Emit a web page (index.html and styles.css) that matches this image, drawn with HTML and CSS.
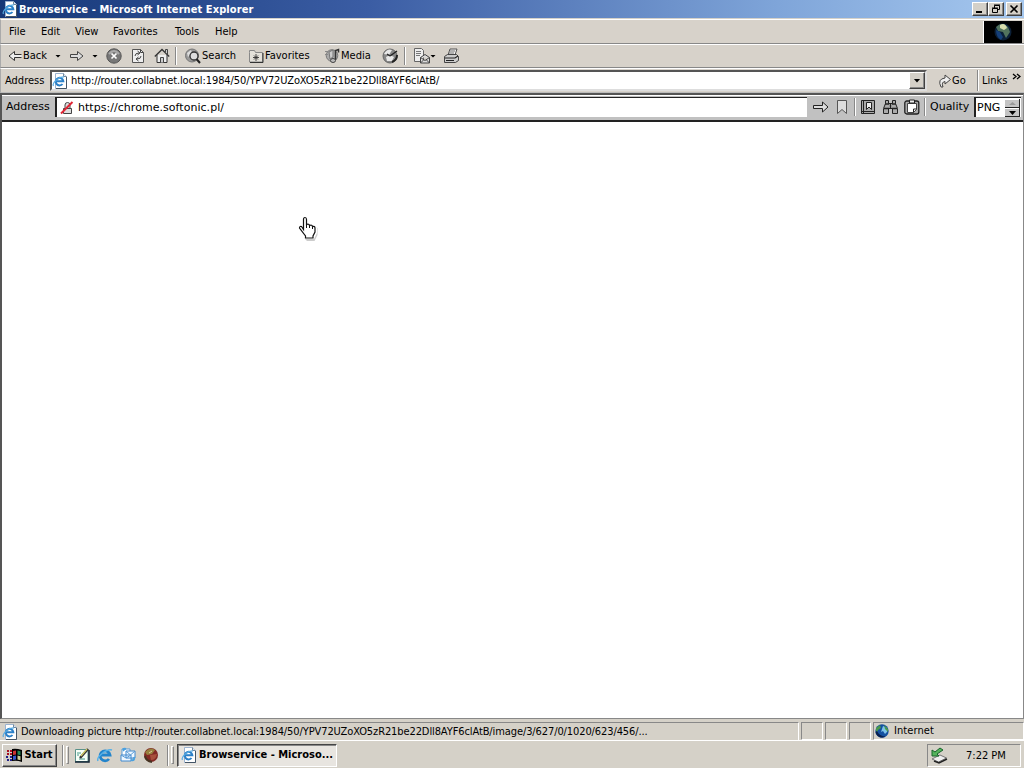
FILE: index.html
```html
<!DOCTYPE html>
<html lang="en">
<head>
<meta charset="utf-8">
<title>Browservice - Microsoft Internet Explorer</title>
<link rel="stylesheet" href="styles.css">
</head>
<body>
<svg class="defs" width="0" height="0">
  <defs>
    <symbol id="ie" viewBox="0 0 16 16">
      <path d="M3.500.5h8l3 3v12h-11z" fill="#fff" stroke="#9bb3d0"/>
      <path d="M11.500.5v3h3" fill="#dce8f4" stroke="#789"/>
      <path d="M14.500 4v11.500H4" fill="none" stroke="#456" />
      <path d="M10.500 11a3.800 3.800 0 1 1 .8-2.800H4.500" fill="none" stroke="#2b80c8" stroke-width="2"/>
      <path d="M1.500 13C-.5 10 7 3.500 12 4" fill="none" stroke="#56aae2" stroke-width="1.200"/>
    </symbol>
    <symbol id="arrow" viewBox="0 0 14 12">
      <path d="M.5 4.500h7v-3l5.500 4.500-5.500 4.500v-3h-7z" fill="#ddd" stroke="#444"/>
    </symbol>
    <symbol id="globe" viewBox="0 0 16 16">
      <circle cx="8" cy="8" r="6.700" fill="#1451a0"/>
      <path d="M2 5l4-3 1 3-3 2-1 2-1-1z" fill="#4a9a4b"/>
      <path d="M9 3l4 2v4l-2 2-2-3-2 1z" fill="#7fc4ea"/>
      <path d="M10 2l4 4v3l-3-3z" fill="#4a9a4b"/>
      <path d="M1.500 9a6.600 6.600 0 0 0 10 4.500C7 13 5 12 3 8z" fill="#0a204e"/>
    </symbol>
  </defs>
</svg>
<div class="screen">
  <header class="title">
    <svg class="ic16"><use href="#ie"/></svg>
    <h1>Browservice - Microsoft Internet Explorer</h1>
    <div class="winbtns">
      <button><svg width="14" height="12"><path d="M3 9h6" stroke="#000" stroke-width="2"/></svg></button>
      <button><svg width="14" height="12"><path d="M5.500 5V2.500h5v4H9M5 2h6M3.500 5.500h5v4h-5zM3 5h6" fill="none" stroke="#000"/></svg></button>
      <button class="close"><svg width="14" height="12"><path d="M3.500 2.500l7 7m0-7l-7 7" stroke="#000" stroke-width="1.600"/></svg></button>
    </div>
  </header>
  <nav class="menu">
    <span class="m-file">File</span><span class="m-edit">Edit</span><span class="m-view">View</span><span class="m-fav">Favorites</span><span class="m-tools">Tools</span><span class="m-help">Help</span>
    <div class="throbber"><svg width="38" height="22">
      <circle cx="19" cy="11" r="8.500" fill="#0c2038"/>
      <path d="M12 6q6-6 12 0l2 5-4 6-3-6-5-1z" fill="#52735d"/>
      <path d="M16 4q5-3 7 3l-3 2-4-2z" fill="#d8ddac"/>
      <path d="M12 9l4 2 3 5-2 3q-5-3-5-10z" fill="#153f7a"/>
    </svg></div>
  </nav>
  <div class="tools">
    <svg class="back" width="14" height="12"><path d="M13.500 4.500h-7v-3L1 6l5.500 4.500v-3h7" fill="#eee" stroke="#333"/></svg>
    <span class="t-back">Back</span><i class="dd dd1"></i>
    <svg class="fwd" width="14" height="12"><use href="#arrow"/></svg><i class="dd dd2"></i>
    <svg class="stop" width="16" height="16"><circle cx="8" cy="8" r="7.200" fill="#777" stroke="#555"/><path d="M3 6q5-6 10 0" fill="none" stroke="#aaa" stroke-width="2"/><path d="M5.500 5.500l5 5m0-5l-5 5" stroke="#fff" stroke-width="1.700"/></svg>
    <svg class="refresh" width="14" height="16"><path d="M1.500 1.500h8l3 3v10h-11z" fill="#eee" stroke="#555"/><path d="M9.500 1.500v3h3M4 8q0-3 4-3M6.500 3L9 5 6.500 7M10 8q0 3-4 3M7.500 9L5 11l2.500 2" fill="none" stroke="#444"/></svg>
    <svg class="home" width="16" height="16"><path d="M3 7v7.500h10V7" fill="#eee" stroke="#333"/><path d="M.8 8.500L8 1.500l7.200 7" fill="none" stroke="#333" stroke-width="1.300"/><path d="M11.500 4V1.500h2V6M6.500 14.500v-5h3v5" fill="#ccc" stroke="#444"/></svg>
    <b class="sep"></b>
    <svg class="search" width="16" height="16"><circle cx="7" cy="7.500" r="6.500" fill="#999" stroke="#777"/><path d="M2 5l4-3 1 3-4 4" fill="#ddd"/><circle cx="9" cy="8" r="4" fill="#ddd" stroke="#333" stroke-width="1.300"/><path d="M11.500 11l3.500 4" stroke="#222" stroke-width="2"/></svg>
    <span class="t-search">Search</span>
    <svg class="fav" width="16" height="16"><path d="M1.500 4.500v-2h5l1 2h7v9.500h-13z" fill="#e4e1da" stroke="#888"/><path d="M15 5v9.500H2" fill="none" stroke="#333"/><path d="M8 6v7M5 9.500h6M6 7.500l4 4m0-4l-4 4" stroke="#333" stroke-width=".9"/></svg>
    <span class="t-fav">Favorites</span>
    <svg class="media" width="17" height="16"><circle cx="8" cy="7.500" r="5.800" fill="#aaa" stroke="#777"/><path d="M1 3.500h3m-3 3h3" stroke="#888"/><path d="M5 4l4-2v7l-3 2z" fill="#ccc" stroke="#777"/><path d="M11.500 12V2.500l3-1v3" fill="none" stroke="#333" stroke-width="1.500"/><ellipse cx="9" cy="12.500" rx="2.500" ry="2" fill="#bbb" stroke="#444"/></svg>
    <span class="t-media">Media</span>
    <svg class="history" width="17" height="16"><circle cx="8" cy="8" r="7" fill="#888" stroke="#666"/><path d="M2 6q3-6 8-4L7 7zM4 9l4-2 4 2-2 4H5z" fill="#e8e8e8"/><path d="M8 8l7-5M8 8L5 6" stroke="#222" stroke-width="1.500"/><path d="M10 14q5-2 5-7" fill="none" stroke="#222" stroke-width="2"/></svg>
    <b class="sep"></b>
    <svg class="edit" width="18" height="16"><path d="M1.500.5h7l2 2v11h-9z" fill="#eee" stroke="#666"/><path d="M3 3.500h5m-5 2h5m-5 2h4" stroke="#777"/><path d="M7.500 9.500l4.500-3 4.500 3v5.500h-9zl4.500 3 4.500-3M7.500 15l3-3m6 3l-3-3" fill="#ddd" stroke="#444"/></svg>
    <i class="dd dd3"></i>
    <svg class="print" width="17" height="16"><path d="M5 7l2-6h7l-2 6" fill="#eee" stroke="#555"/><path d="M7 3h5M6 5h5" stroke="#777"/><path d="M1.500 8.500l3-2h9l2 2v4l-3 2h-11z" fill="#ccc" stroke="#444"/><path d="M2 10h10l3-2M3 12.500h8" fill="none" stroke="#222" stroke-width="1.200"/></svg>
  </div>
  <div class="address">
    <span class="label">Address</span>
    <div class="field"><svg class="ic16"><use href="#ie"/></svg><span class="url">http://router.collabnet.local:1984/50/YPV72UZoXO5zR21be22Dll8AYF6clAtB/</span><button class="drop"><i class="dd"></i></button></div>
    <svg class="go" width="14" height="15"><path d="M3 14Q-1 6 7 5V2l5.500 4.500L7 11V8.500Q3 9 5 14z" fill="#eee" stroke="#444"/></svg>
    <span class="t-go">Go</span><b class="sep tall"></b><span class="t-links">Links</span>
    <svg class="chev" width="9" height="8"><path d="M1 1l3 2.500L1 6m4-5l3 2.500L5 6" fill="none" stroke="#000" stroke-width="1.300"/></svg>
  </div>
  <main class="page">
    <div class="bsbar">
      <span class="bslabel">Address</span>
      <div class="bsfield"><svg width="14" height="14"><path d="M3.500 7.500h8v5h-8zM5 7V4a2.500 2.500 0 0 1 5 0v3" fill="#ddd" stroke="#444"/><path d="M1 12.500L12.500 1" stroke="#e02535" stroke-width="2"/></svg><span class="bsurl">https://chrome.softonic.pl/</span></div>
      <svg class="bgo" width="18" height="14"><path d="M1.500 5.500h9V2l5.500 5-5.500 5V8.500h-9z" fill="#ddd" stroke="#222"/></svg>
      <svg class="mark" width="12" height="16"><path d="M1.500 1.500h9v13l-4.500-4-4.500 4z" fill="#ddd" stroke="#555"/></svg>
      <b class="sep"></b>
      <svg class="book" width="16" height="16"><path d="M1.500 1.500h13v13h-13z" fill="#aaa" stroke="#222"/><path d="M3.500 2v12M2 12.500h12" stroke="#222"/><path d="M6.500 3.500v7l2.500-2.500 2.500 2.500v-7z" fill="#eee" stroke="#222"/></svg>
      <svg class="bino" width="18" height="16"><path d="M1.500 14.500v-5l2-5v-3h3v3h4v-3h3v3l2 5v5h-5v-5h-4v5z" fill="#aaa" stroke="#222"/><path d="M2 9.500h5m3 0h5M3 5h4m3 0h4M8.500 5v5" stroke="#222" stroke-width="1.300"/></svg>
      <svg class="clip" width="16" height="17"><rect x=".8" y="2" width="14" height="13" rx="2" fill="#aaa" stroke="#222" stroke-width="1.300"/><path d="M3.500 4.500h9v6l-3 3h-6z" fill="#fff" stroke="#444"/><path d="M5.500 1h5v3h-5z" fill="#eee" stroke="#222"/><path d="M12.500 10h-3v3.500" fill="none" stroke="#222"/></svg>
      <b class="sep"></b><span class="quality">Quality</span>
      <div class="png"><span>PNG</span><svg width="15" height="18"><path d="M0 0h15v18H0z" fill="#c4c4c4"/><path d="M0 8.500h15M14.500 0v18M0 17.500h15" stroke="#222"/><path d="M0 9.500h14M0 .5h14" stroke="#fff"/><path d="M4 6l3.500-3L11 6z" fill="#999"/><path d="M4 12h7l-3.500 4z" fill="#000"/></svg></div>
    </div>
    <svg class="cursor" width="22" height="26"><path d="M8 23h9l3-6v-5l-1-1 1.500 1v7l-3 6H10z" fill="#ccc"/><path d="M6.500 13.500V3.500q0-2 1.500-2t1.500 2v5q2.500-1 3 1 2.500-1 3 1 2.500-.5 2.500 1.500v4l-2 4v2H8.500v-2l-6-8q0-2 2-1.500z" fill="#fff" stroke="#111" stroke-width="1.200"/><path d="M9.500 8v4m3-3v3m3-2v3" stroke="#111"/></svg>
  </main>
  <footer class="status">
    <div class="message"><svg class="ic16"><use href="#ie"/></svg><span class="download">Downloading picture http://router.collabnet.local:1984/50/YPV72UZoXO5zR21be22Dll8AYF6clAtB/image/3/627/0/1020/623/456/...</span></div>
    <i class="cell"></i><i class="cell"></i><i class="cell"></i>
    <div class="zone"><svg class="ic16"><use href="#globe"/></svg><span class="internet">Internet</span></div>
  </footer>
  <div class="taskbar">
    <button class="start"><svg width="17" height="16"><path d="M6 2q4-1 10 1v12q-5-2-10-1z" fill="#000"/><path d="M7 4l3-.5v4L7 8z" fill="#c33"/><path d="M11.500 3.500l3 .7v4l-3-.7z" fill="#285"/><path d="M7 9l3-.4v4L7 13z" fill="#35c"/><path d="M11.500 8.600l3 .7v4l-3-.7z" fill="#cc9"/><path d="M1 4h2m1 0h2M1 7h2m1 0h2" stroke="#a12" stroke-width="2"/><path d="M0 10h2m2 0h2M1 13h2m1 0h2" stroke="#228" stroke-width="2"/></svg><span class="t-start">Start</span></button>
    <b class="grip"></b><b class="handle"></b>
    <svg class="desktop" width="16" height="16"><path d="M1.500 2.500h12.500v12H1.500z" fill="#f7fff8" stroke="#5a928a"/><path d="M1 15h14V3" fill="none" stroke="#123" stroke-width="1.500"/><path d="M3 6h4m-4 2h2M5 12h6" stroke="#498"/><path d="M6 11L14 2" stroke="#333" stroke-width="2.500"/><path d="M7 9l6-7" stroke="#d5ce65" stroke-width="1.200"/></svg>
    <svg class="quickie" width="16" height="16"><path d="M12 12a5 5 0 1 1 1-4H4" fill="none" stroke="#2384cb" stroke-width="2.800"/><path d="M1 14C-1 10 10 1 15 3" fill="none" stroke="#54b1e9" stroke-width="1.500"/></svg>
    <svg class="outlook" width="16" height="16"><path d="M2 2h8v8H2z" fill="#fff" stroke="#5a9bd5"/><path d="M1 8h10v6H1zM6 4h9v7H6z" fill="#eef7ff" stroke="#4089cf"/><path d="M6 4l4.500 4L15 4M1 8l5 3 5-3" fill="none" stroke="#5a9bd5"/><path d="M11 13q4 1 3-3M4 4Q2 1 6 2" fill="none" stroke="#4ba1df" stroke-width="2"/></svg>
    <svg class="redball" width="16" height="16"><circle cx="8" cy="8" r="7" fill="#822a25"/><path d="M2 5q5-6 10-2l-3 4-5 1z" fill="#96803f"/><path d="M7 8l7-1q-1 6-6 6z" fill="#a8503c"/><path d="M2 9q1 5 7 6" fill="none" stroke="#432" stroke-width="2"/><path d="M6 6l3-2" stroke="#dc9"/></svg>
    <b class="grip g2"></b><b class="handle"></b>
    <div class="task"><svg class="ic16"><use href="#ie"/></svg><span class="t-task">Browservice - Microso...</span></div>
    <div class="tray"><svg width="18" height="18"><path d="M2 13l8-4 6.500 3-8 4z" fill="#eee" stroke="#777"/><path d="M4 15l5 2 8-4" fill="none" stroke="#222" stroke-width="1.500"/><path d="M2 4v6h7L7 8l6-4-3-2-5 4z" fill="#54b45c" stroke="#17642c"/></svg><span class="clock">7:22 PM</span></div>
  </div>
</div>
</body>
</html>
```
FILE: styles.css
```css
* { box-sizing: border-box; }
body { margin: 0; background: #d5d1c9; overflow: hidden; color: #000; font: 11px/14px "DejaVu Sans Condensed", "DejaVu Sans", sans-serif; font-stretch: condensed; }
.defs { position: absolute; }
.screen { width: 1024px; height: 768px; display: flex; flex-direction: column; }
svg { display: block; flex: none; }
span, h1 { white-space: nowrap; flex: none; }
button { display: flex; padding: 0; margin: 0; font: inherit; color: #000; background: #d4d0c8; border: 1px solid; border-color: #fff #404040 #404040 #fff; box-shadow: inset -1px -1px #888; }
.ic16 { width: 16px; height: 16px; }
.title { height: 18px; display: flex; align-items: center; padding: 0 2px; background: linear-gradient(90deg, #153777, #3b5da4 36%, #7fa5d9 76%, #a6c8ef); }
h1 { margin: 0 0 0 1px; padding-top: 1px; color: #fff; font-size: 11px; line-height: 14px; width: 235px; letter-spacing: .08px; }
.winbtns { display: flex; margin-left: auto; }
.winbtns button { width: 16px; height: 14px; }
.winbtns .close { margin-left: 2px; }
.menu, .tools, .address { display: flex; align-items: center; border-top: 1px solid #fff; border-bottom: 1px solid #888; border-left: 1px solid #aaa; background: #d7d2ca; }
.menu { height: 25px; margin-top: 1px; padding-left: 8px; }
.m-file { width: 32px; } .m-edit { width: 34px; } .m-view { width: 38px; } .m-fav { width: 62px; } .m-tools { width: 40px; }
.throbber { margin-left: auto; margin-right: 2px; width: 39px; height: 22px; background: #000; border-left: 1px solid #fff; }
.tools { height: 24px; padding-left: 7px; }
.t-back { width: 27px; margin-left: 1px; }
.dd { width: 7px; height: 4px; background: #000; clip-path: polygon(0 0, 100% 0, 50% 100%); flex: none; }
.dd1, .dd2, .dd3 { width: 6px; height: 3px; }
.dd1 { margin-left: 5px; } .fwd { margin-left: 9px; } .dd2 { margin-left: 8px; }
.stop { margin-left: 8px; } .refresh { margin-left: 9px; } .home { margin-left: 9px; }
.sep { width: 2px; height: 18px; border-left: 1px solid #888; border-right: 1px solid #fff; flex: none; }
.home + .sep { margin-left: 5px; } .search { margin-left: 8px; }
.t-search { width: 34px; margin-left: 1px; } .fav { margin-left: 12px; }
.t-fav { width: 46px; margin-left: 1px; } .media { margin-left: 13px; }
.t-media { width: 29px; margin-left: 0; } .history { margin-left: 12px; }
.history + .sep { margin-left: 5px; } .edit { margin-left: 7px; } .dd3 { margin-left: -1px; } .print { margin-left: 7px; }
.address { height: 25px; padding-left: 4px; border-bottom-color: #bbb; }
.label { width: 45px; }
.field { display: flex; align-items: center; width: 877px; height: 21px; background: #fff; border: 2px solid; border-color: #555 #ddd #ddd #555; }
.url { margin-left: 3px; letter-spacing: -.1px; }
.drop { width: 16px; height: 17px; margin-left: auto; align-items: center; justify-content: center; }
.go { margin-left: 11px; } .t-go { width: 15px; }
.tall { height: 21px; margin-left: 10px; } .t-links { margin-left: 3px; width: 25px; } .chev { margin: 0 0 7px 5px; }
.page { height: 626px; background: #fff; border: 1px solid #888; border-left: 2px solid #555; border-top: 2px solid #555; position: relative; }
.bsbar { height: 27px; display: flex; align-items: center; background: #c1c1c1; border-top: 1px solid #fff; border-bottom: 2px solid #222; font: 11px/14px "DejaVu Sans", sans-serif; padding: 0 0 2px 4px; }
.bslabel { width: 49px; }
.bsfield { width: 752px; height: 20px; background: #fff; border-top: 1px solid #222; border-left: 2px solid #222; display: flex; align-items: center; padding-left: 3px; }
.bsurl { margin-left: 4px; letter-spacing: .04px; }
.bgo { margin-left: 5px; } .mark { margin-left: 6px; } .mark + .sep { margin-left: 6px; }
.book { margin-left: 4px; } .bino { margin-left: 6px; } .clip { margin-left: 4px; } .clip + .sep { margin-left: 4px; }
.quality { width: 44px; margin-left: 4px; }
.png { width: 47px; height: 20px; background: #fff; border-top: 1px solid #222; border-left: 2px solid #222; display: flex; align-items: center; }
.png span { width: 29px; padding-left: 1px; }
.cursor { position: absolute; left: 295px; top: 121px; }
.status { height: 21px; display: flex; gap: 2px; background: #d5d1c8; padding-top: 3px; }
.message { width: 799px; height: 18px; display: flex; align-items: center; padding-left: 2px; border-top: 1px solid #888; border-right: 1px solid #fff; }
.download { margin-left: 3px; letter-spacing: -.1px; }
.cell { width: 22px; height: 18px; border: 1px solid; border-color: #888 #fff #fff #888; }
.zone { width: 151px; height: 18px; border: 1px solid; border-color: #888 #fff #fff #888; display: flex; align-items: center; }
.internet { margin-left: 4px; letter-spacing: .07px; }
.taskbar { height: 28px; border-top: 1px solid #fff; background: #d5d1c8; display: flex; align-items: center; padding: 1px 0 0 2px; }
.start { width: 55px; height: 23px; align-items: center; padding-left: 3px; font-weight: bold; }
.t-start { width: 31px; }
.grip { width: 2px; height: 21px; border-left: 1px solid #888; border-right: 1px solid #fff; margin-left: 5px; flex: none; }
.handle { width: 3px; height: 18px; border: 1px solid; border-color: #fff #888 #888 #fff; margin-left: 2px; flex: none; }
.desktop { margin-left: 5px; } .quickie, .outlook, .redball { margin-left: 7px; }
.g2 { margin-left: 8px; }
.task { display: flex; align-items: center; width: 160px; height: 23px; margin-left: 3px; padding-left: 3px; font-weight: bold; border: 1px solid; border-color: #444 #fff #fff #444; background: #e8e5e0; box-shadow: inset 1px 1px #888; }
.t-task { margin-left: 2px; }
.tray { margin: 0 3px 0 auto; width: 94px; height: 23px; display: flex; align-items: center; border: 1px solid; border-color: #888 #fff #fff #888; padding-left: 2px; }
.clock { margin-left: 18px; padding-top: 1px; width: 42px; }
```
